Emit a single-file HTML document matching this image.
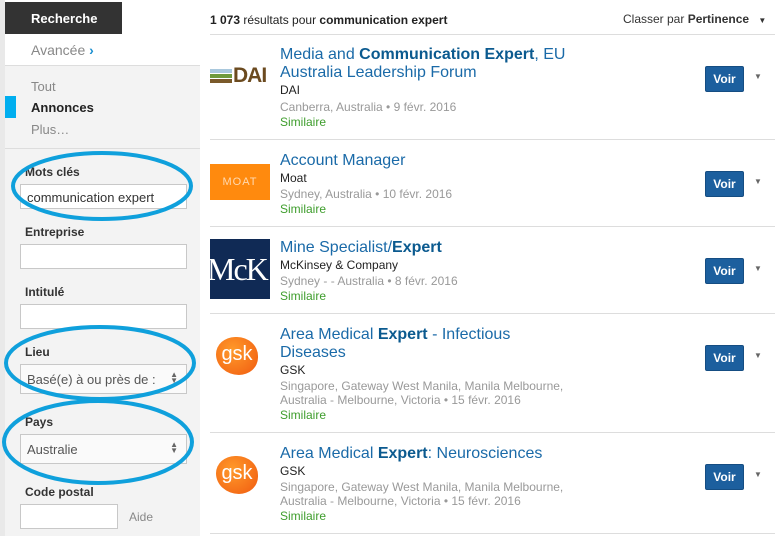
<!DOCTYPE html>
<html><head><meta charset="utf-8"><style>
*{margin:0;padding:0;box-sizing:border-box}
body{width:777px;height:536px;overflow:hidden;background:#e9e9e9;font-family:"Liberation Sans",Arial,sans-serif;position:relative}
.a{position:absolute}
.side{left:5px;top:0;width:195px;height:536px;background:#f3f3f3}
.lbl{position:absolute;left:25px;font-size:12px;font-weight:bold;color:#333}
.inp{position:absolute;left:20px;width:167px;height:25px;background:#fff;border:1px solid #c8c8c8;font-size:13px;color:#333;padding:5px 6px}
.sel{color:#555;padding-top:7px}
.arr{position:absolute;right:8px;top:7px;font-size:8px;line-height:6px;color:#666}
.main{left:200px;top:0;width:577px;height:536px;background:#fff}
.row{position:absolute;left:10px;width:565px;border-top:1px solid #ddd}
.t{position:absolute;left:80px;font-size:16px;color:#1a6aa8;line-height:18px}
.t b{color:#0b5a8f}
.c{position:absolute;left:80px;font-size:12px;color:#222}
.g{position:absolute;left:80px;font-size:12px;color:#999;line-height:14px}
.s{position:absolute;left:80px;font-size:12px;color:#3e9d2c}
.v{position:absolute;left:505px;width:39px;height:26px;background:#1c5f9e;border:1px solid #154d82;border-radius:2px;color:#fff;font-weight:bold;font-size:12px;text-align:center;line-height:24px}
.dd{position:absolute;left:554px;font-size:8px;color:#666}
</style></head><body>
<div class="a side"></div>
<div class="a" style="left:5px;top:0;width:195px;height:66px;background:#fff;border-bottom:1px solid #ddd"></div>
<div class="a" style="left:5px;top:2px;width:117px;height:32px;background:#333;color:#fff;font-weight:bold;font-size:13px;padding:9px 0 0 26px">Recherche</div>
<div class="a" style="left:31px;top:42px;font-size:14px;color:#888">Avancée <span style="color:#1a8fd0;font-weight:bold">›</span></div>
<div class="a" style="left:31px;top:79px;font-size:13px;color:#888">Tout</div>
<div class="a" style="left:5px;top:96px;width:11px;height:22px;background:#00aeef"></div>
<div class="a" style="left:31px;top:100px;font-size:13px;font-weight:bold;color:#222">Annonces</div>
<div class="a" style="left:31px;top:122px;font-size:13px;color:#888">Plus…</div>
<div class="a" style="left:5px;top:148px;width:195px;border-top:1px solid #ddd"></div>
<div class="lbl" style="top:165px">Mots clés</div>
<div class="inp" style="top:184px">communication expert</div>
<div class="lbl" style="top:225px">Entreprise</div>
<div class="inp" style="top:244px"></div>
<div class="lbl" style="top:285px">Intitulé</div>
<div class="inp" style="top:304px"></div>
<div class="lbl" style="top:345px">Lieu</div>
<div class="inp sel" style="top:364px;height:30px;background:#fafafa">Basé(e) à ou près de :<div class="arr">▲<br>▼</div></div>
<div class="lbl" style="top:415px">Pays</div>
<div class="inp sel" style="top:434px;height:30px;background:#fafafa">Australie<div class="arr">▲<br>▼</div></div>
<div class="lbl" style="top:485px">Code postal</div>
<div class="inp" style="top:504px;width:98px"></div>
<div class="a" style="left:129px;top:510px;font-size:12px;color:#888">Aide</div>
<svg class="a" style="left:0;top:0" width="200" height="536"><g fill="none" stroke="#0fa0dc" stroke-width="4"><ellipse cx="102" cy="186" rx="89" ry="33"/><ellipse cx="100" cy="363" rx="94" ry="36"/><ellipse cx="98" cy="442" rx="94" ry="41"/></g></svg>

<div class="a main">
<div class="a" style="left:10px;top:13px;font-size:12px;color:#222"><b>1 073</b> résultats pour <b>communication expert</b></div>
<div class="a" style="left:423px;top:12px;font-size:12px;color:#333">Classer par <b>Pertinence</b> <span style="font-size:8px;margin-left:6px">▼</span></div>
<div class="row" style="top:34px"></div>
<!-- row1 -->
<div class="a" style="left:10px;top:67px;width:60px;height:18px">
<div class="a" style="left:0;top:2px;width:22px;height:4px;background:#a9c8dd"></div>
<div class="a" style="left:0;top:7px;width:22px;height:4px;background:#6f9a3b"></div>
<div class="a" style="left:0;top:12px;width:22px;height:4px;background:#7a5a2a"></div>
<div class="a" style="left:23px;top:-3px;font-size:21px;font-weight:bold;color:#6b4a1f;letter-spacing:-1px">DAI</div></div>
<div class="t" style="top:46px">Media and <b>Communication Expert</b>, EU<br>Australia Leadership Forum</div>
<div class="c" style="top:83px">DAI</div>
<div class="g" style="top:100px">Canberra, Australia • 9 févr. 2016</div>
<div class="s" style="top:115px">Similaire</div>
<div class="v" style="top:66px">Voir</div><div class="dd" style="top:72px">▼</div>
<div class="row" style="top:139px"></div>
<!-- row2 -->
<div class="a" style="left:10px;top:164px;width:60px;height:36px;background:#ff8a0e;color:#ffd9b0;font-size:11px;text-align:center;line-height:36px;letter-spacing:1px">MOAT</div>
<div class="t" style="top:152px">Account Manager</div>
<div class="c" style="top:171px">Moat</div>
<div class="g" style="top:187px">Sydney, Australia • 10 févr. 2016</div>
<div class="s" style="top:202px">Similaire</div>
<div class="v" style="top:171px">Voir</div><div class="dd" style="top:177px">▼</div>
<div class="row" style="top:226px"></div>
<!-- row3 -->
<div class="a" style="left:10px;top:239px;width:60px;height:60px;background:#102a55;overflow:hidden"><div class="a" style="left:-3px;top:12px;font-family:'Liberation Serif',serif;font-size:32px;color:#fff;letter-spacing:-2px">McK</div></div>
<div class="t" style="top:239px">Mine Specialist/<b>Expert</b></div>
<div class="c" style="top:258px">McKinsey &amp; Company</div>
<div class="g" style="top:274px">Sydney - - Australia • 8 févr. 2016</div>
<div class="s" style="top:289px">Similaire</div>
<div class="v" style="top:258px">Voir</div><div class="dd" style="top:264px">▼</div>
<div class="row" style="top:313px"></div>
<!-- row4 -->
<div class="a" style="left:16px;top:337px;width:42px;height:38px;background:radial-gradient(circle at 40% 35%,#ff9a2a,#f05a10);border-radius:50% 55% 50% 60%;color:#fff;font-size:20px;text-align:center;line-height:34px">gsk</div>
<div class="t" style="top:326px">Area Medical <b>Expert</b> - Infectious<br>Diseases</div>
<div class="c" style="top:363px">GSK</div>
<div class="g" style="top:379px">Singapore, Gateway West Manila, Manila Melbourne,<br>Australia - Melbourne, Victoria • 15 févr. 2016</div>
<div class="s" style="top:408px">Similaire</div>
<div class="v" style="top:345px">Voir</div><div class="dd" style="top:351px">▼</div>
<div class="row" style="top:432px"></div>
<!-- row5 -->
<div class="a" style="left:16px;top:456px;width:42px;height:38px;background:radial-gradient(circle at 40% 35%,#ff9a2a,#f05a10);border-radius:50% 55% 50% 60%;color:#fff;font-size:20px;text-align:center;line-height:34px">gsk</div>
<div class="t" style="top:445px">Area Medical <b>Expert</b>: Neurosciences</div>
<div class="c" style="top:464px">GSK</div>
<div class="g" style="top:480px">Singapore, Gateway West Manila, Manila Melbourne,<br>Australia - Melbourne, Victoria • 15 févr. 2016</div>
<div class="s" style="top:509px">Similaire</div>
<div class="v" style="top:464px">Voir</div><div class="dd" style="top:470px">▼</div>
<div class="row" style="top:533px"></div>
</div>
</body></html>
